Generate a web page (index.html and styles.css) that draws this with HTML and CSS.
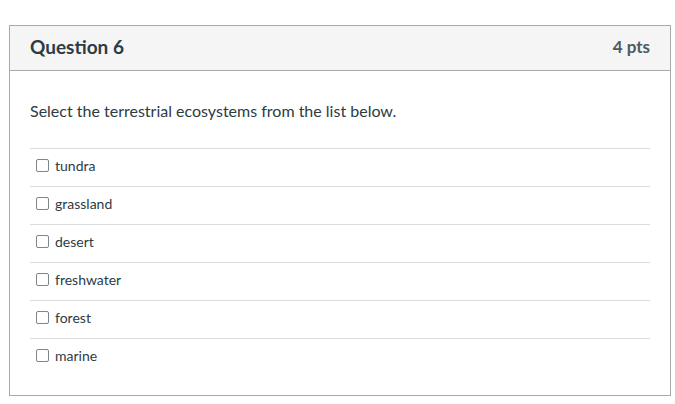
FILE: index.html
```html
<!DOCTYPE html>
<html lang="en">
<head>
    <meta charset="UTF-8">
    <title>Question 6</title>
    <link rel="stylesheet" href="styles.css">
</head>
<body>
    <div class="question">
        <div class="question-header">
            <h2>Question 6</h2>
            <span class="points">4 pts</span>
        </div>
        <div class="question-body">
            <p class="question-text">Select the terrestrial ecosystems from the list below.</p>
            <ul class="answers">
                <li><label><input type="checkbox"> tundra</label></li>
                <li><label><input type="checkbox"> grassland</label></li>
                <li><label><input type="checkbox"> desert</label></li>
                <li><label><input type="checkbox"> freshwater</label></li>
                <li><label><input type="checkbox"> forest</label></li>
                <li><label><input type="checkbox"> marine</label></li>
            </ul>
        </div>
    </div>
</body>
</html>
```

FILE: styles.css
```css
body {
    margin: 0;
    padding: 25px 0 0 9px;
    background: #fff;
    font-family: Lato, "Open Sans", sans-serif;
    color: #2d3b45;
}
.question {
    width: 660px;
    height: 369px;
    border: 1px solid #a9a9a9;
}
.question-header {
    display: flex;
    justify-content: space-between;
    align-items: center;
    height: 41px;
    padding: 0 20px 3px;
    background: #f5f5f5;
    border-bottom: 1px solid #a9a9a9;
}
.question-header h2 {
    margin: 0;
    font-size: 19px;
    font-weight: bold;
}
.points {
    font-size: 17px;
    font-weight: bold;
    color: #4d5a63;
}
.question-body {
    padding: 0 20px;
}
.question-text {
    margin: 0;
    padding: 29px 0 26px;
    font-size: 16px;
    line-height: 22px;
}
.answers {
    list-style: none;
    margin: 0;
    padding: 0;
}
.answers li {
    border-top: 1px solid #dcdcdc;
    height: 33px;
    padding-bottom: 4px;
    display: flex;
    align-items: center;
}
.answers label {
    display: flex;
    align-items: center;
    font-size: 14px;
    padding-left: 6px;
}
.answers input {
    appearance: none;
    -webkit-appearance: none;
    width: 13px;
    height: 13px;
    margin: 0 6px 0 0;
    border: 1px solid #7d868c;
    border-radius: 2px;
    background: #fff;
}
```
